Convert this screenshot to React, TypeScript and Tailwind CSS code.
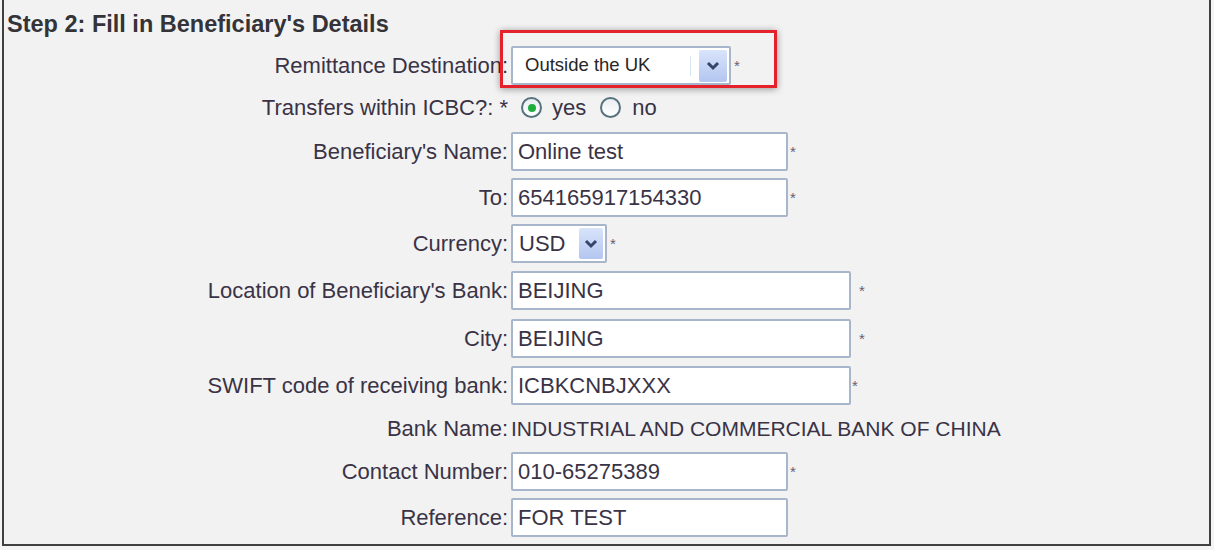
import React from "react";

type Row = {
  label: string;
  h: number;
  kind: "input" | "select" | "radio" | "text" | "dest";
  value?: string;
  width?: number;
  starGap?: number;
};

const rows: Row[] = [
  { label: "Remittance Destination:", h: 42, kind: "dest", value: "Outside the UK" },
  { label: "Transfers within ICBC?: *", h: 43, kind: "radio" },
  { label: "Beneficiary's Name:", h: 45, kind: "input", value: "Online test", width: 277, starGap: 2 },
  { label: "To:", h: 46, kind: "input", value: "654165917154330", width: 277, starGap: 2 },
  { label: "Currency:", h: 47, kind: "select", value: "USD" },
  { label: "Location of Beneficiary's Bank:", h: 47, kind: "input", value: "BEIJING", width: 340, starGap: 8 },
  { label: "City:", h: 48, kind: "input", value: "BEIJING", width: 340, starGap: 8 },
  { label: "SWIFT code of receiving bank:", h: 46, kind: "input", value: "ICBKCNBJXXX", width: 340, starGap: 1 },
  { label: "Bank Name:", h: 41, kind: "text", value: "INDUSTRIAL AND COMMERCIAL BANK OF CHINA" },
  { label: "Contact Number:", h: 44, kind: "input", value: "010-65275389", width: 277, starGap: 2 },
  { label: "Reference:", h: 48, kind: "input", value: "FOR TEST", width: 277 },
];

const Star = ({ gap = 2 }: { gap?: number }) => (
  <span
    className="text-[15px] leading-none text-[#666070]"
    style={{ marginLeft: gap }}
  >
    *
  </span>
);

const Arrow = ({ w, h }: { w: number; h: number }) => (
  <div
    className="flex items-center justify-center rounded-[2px] bg-gradient-to-b from-[#d9e4fb] to-[#b3c6f0]"
    style={{ width: w, height: h }}
  >
    <svg width="14" height="10" viewBox="0 0 14 10">
      <path d="M2 2 L7 7 L12 2" fill="none" stroke="#34456c" strokeWidth="3" />
    </svg>
  </div>
);

const Radio = ({ checked }: { checked?: boolean }) => (
  <span className="flex h-[21px] w-[21px] items-center justify-center rounded-full border-2 border-[#56727f] bg-gradient-to-b from-[#e9eef1] to-white">
    {checked && <span className="h-[8px] w-[8px] rounded-full bg-[#1fae3e]" />}
  </span>
);

function Value({ row }: { row: Row }) {
  if (row.kind === "dest") {
    return (
      <div className="relative flex items-center">
        <div className="absolute -left-[11px] -top-[16px] h-[58px] w-[277px] border-[3px] border-[#e5222b] shadow-[0_1px_7px_rgba(0,0,0,0.4)]" />
        <div className="relative flex h-[39px] w-[220px] items-center rounded-[2px] border-2 border-[#a7b6cb] bg-white">
          <span className="pl-[12px] text-[18.5px] text-[#262626]">{row.value}</span>
          <span className="absolute right-[38px] top-[8px] h-[20px] w-px bg-[#d8e6f2]" />
          <div className="absolute right-[2px] top-[2px]">
            <Arrow w={28} h={32} />
          </div>
        </div>
        <Star gap={3} />
      </div>
    );
  }
  if (row.kind === "radio") {
    return (
      <div className="flex items-center pl-[10px]">
        <Radio checked />
        <span className="ml-[10px]">yes</span>
        <span className="ml-[14px]">
          <Radio />
        </span>
        <span className="ml-[11px]">no</span>
      </div>
    );
  }
  if (row.kind === "select") {
    return (
      <div className="flex items-center">
        <div className="relative flex h-[39px] w-[96px] items-center rounded-[2px] border-2 border-[#a7b6cb] bg-white">
          <span className="pl-[6px]">{row.value}</span>
          <div className="absolute right-[2px] top-[2px]">
            <Arrow w={24} h={31} />
          </div>
        </div>
        <Star gap={3} />
      </div>
    );
  }
  if (row.kind === "text") {
    return <div className="text-[21px]">{row.value}</div>;
  }
  return (
    <div className="flex items-center">
      <div
        className="flex h-[39px] items-center rounded-[2px] border-2 border-[#a7b6cb] bg-white pl-[5px]"
        style={{ width: row.width }}
      >
        {row.value}
      </div>
      {row.starGap !== undefined && <Star gap={row.starGap} />}
    </div>
  );
}

export default function App() {
  return (
    <div className="h-[550px] w-[1214px] bg-[#f4f4f4] font-['Liberation_Sans',Arial,sans-serif]">
      <div className="ml-[2px] h-[546px] w-[1209px] border-x-2 border-b-2 border-[#404040] bg-[#f2f2f2]">
        <div className="h-[44px] pl-[3px] pt-[9px] text-[23.5px] font-bold leading-[30px] text-[#333338]">
          Step 2: Fill in Beneficiary's Details
        </div>
        <div className="text-[22px] text-[#3a3346]">
          {rows.map((row) => (
            <div key={row.label} className="grid grid-cols-[504px_1fr] items-center gap-x-[3px]" style={{ height: row.h }}>
              <div className="text-right">{row.label}</div>
              <Value row={row} />
            </div>
          ))}
        </div>
      </div>
    </div>
  );
}
